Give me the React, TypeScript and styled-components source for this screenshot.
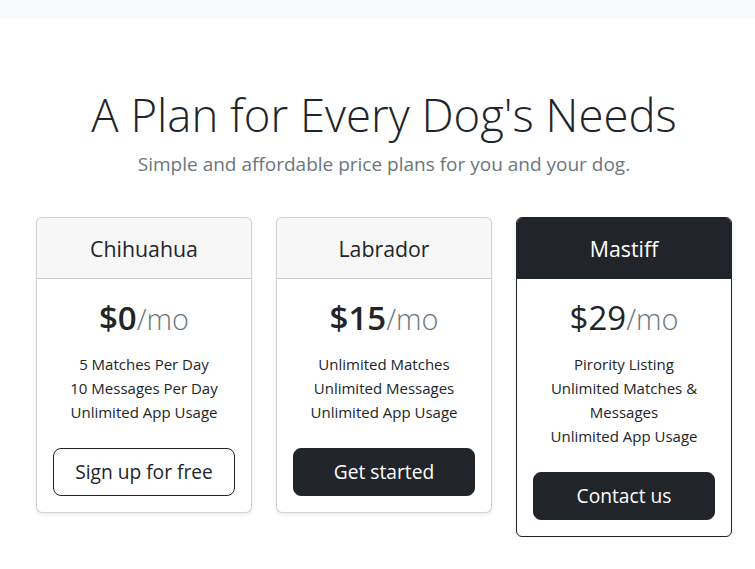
import React from "react";
import styled, { createGlobalStyle } from "styled-components";

const Global = createGlobalStyle`
  html, body { margin: 0; padding: 0; background: #fff; }
  body {
    font-family: "Open Sans", "Noto Sans", sans-serif;
    color: #212529;
    font-size: 15px;
    line-height: 24px;
  }
  * { box-sizing: border-box; }
`;

const TopBar = styled.div`
  height: 19px;
  background: #f8f9fa;
`;

const Header = styled.header`
  padding: 69px 0 38px;
  margin-left: 13px;
  text-align: center;
`;

const Title = styled.h1`
  margin: 0 0 8px;
  font-size: 45.5px;
  font-weight: 300;
  line-height: 53px;
`;

const Lead = styled.p`
  margin: 0;
  font-size: 19px;
  line-height: 30px;
  color: #6c757d;
`;

const Cards = styled.div`
  display: grid;
  grid-template-columns: repeat(3, 216px);
  gap: 24px;
  justify-content: center;
  align-items: start;
  margin-left: 13px;
`;

const Card = styled.div<{ $dark?: boolean }>`
  border: 1px solid ${(p) => (p.$dark ? "#212529" : "rgba(0,0,0,0.175)")};
  border-radius: 6px;
  box-shadow: 0 2px 4px rgba(0, 0, 0, 0.075);
  background: #fff;
  text-align: center;
  overflow: hidden;
`;

const CardHeader = styled.div<{ $dark?: boolean }>`
  padding: 17px 16px 16px;
  background: ${(p) => (p.$dark ? "#212529" : "#f7f7f7")};
  color: ${(p) => (p.$dark ? "#fff" : "#212529")};
  border-bottom: 1px solid ${(p) => (p.$dark ? "#212529" : "rgba(0,0,0,0.175)")};
`;

const PlanName = styled.h4`
  margin: 0;
  font-size: 21.3px;
  font-weight: 400;
  line-height: 27px;
`;

const CardBody = styled.div`
  padding: 16px;
`;

const Price = styled.h2<{ $weight: number }>`
  margin: 3px 0 4px;
  font-size: 33px;
  font-weight: ${(p) => p.$weight};
  line-height: 40px;
`;

const Per = styled.small`
  font-size: 0.875em;
  font-weight: 300;
  color: #6c757d;
`;

const Features = styled.ul`
  list-style: none;
  margin: 13px 0 24px;
  padding: 0;
`;

const Button = styled.button<{ $outline?: boolean }>`
  display: block;
  width: 100%;
  height: 48px;
  padding: 8px 16px;
  font-family: inherit;
  font-size: 19.2px;
  line-height: 30px;
  border-radius: 8px;
  border: 1px solid #212529;
  background: ${(p) => (p.$outline ? "#fff" : "#212529")};
  color: ${(p) => (p.$outline ? "#212529" : "#fff")};
  cursor: pointer;
`;

type Plan = {
  name: string;
  price: string;
  priceWeight: number;
  features: string[];
  cta: string;
  outline?: boolean;
  dark?: boolean;
};

const plans: Plan[] = [
  {
    name: "Chihuahua",
    price: "$0",
    priceWeight: 600,
    features: ["5 Matches Per Day", "10 Messages Per Day", "Unlimited App Usage"],
    cta: "Sign up for free",
    outline: true,
  },
  {
    name: "Labrador",
    price: "$15",
    priceWeight: 600,
    features: ["Unlimited Matches", "Unlimited Messages", "Unlimited App Usage"],
    cta: "Get started",
  },
  {
    name: "Mastiff",
    price: "$29",
    priceWeight: 400,
    features: ["Pirority Listing", "Unlimited Matches & Messages", "Unlimited App Usage"],
    cta: "Contact us",
    dark: true,
  },
];

export default function App() {
  return (
    <>
      <Global />
      <TopBar />
      <Header>
        <Title>A Plan for Every Dog's Needs</Title>
        <Lead>Simple and affordable price plans for you and your dog.</Lead>
      </Header>
      <Cards>
        {plans.map((p) => (
          <Card key={p.name} $dark={p.dark}>
            <CardHeader $dark={p.dark}>
              <PlanName>{p.name}</PlanName>
            </CardHeader>
            <CardBody>
              <Price $weight={p.priceWeight}>
                {p.price}
                <Per>/mo</Per>
              </Price>
              <Features>
                {p.features.map((f) => (
                  <li key={f}>{f}</li>
                ))}
              </Features>
              <Button $outline={p.outline}>{p.cta}</Button>
            </CardBody>
          </Card>
        ))}
      </Cards>
    </>
  );
}
